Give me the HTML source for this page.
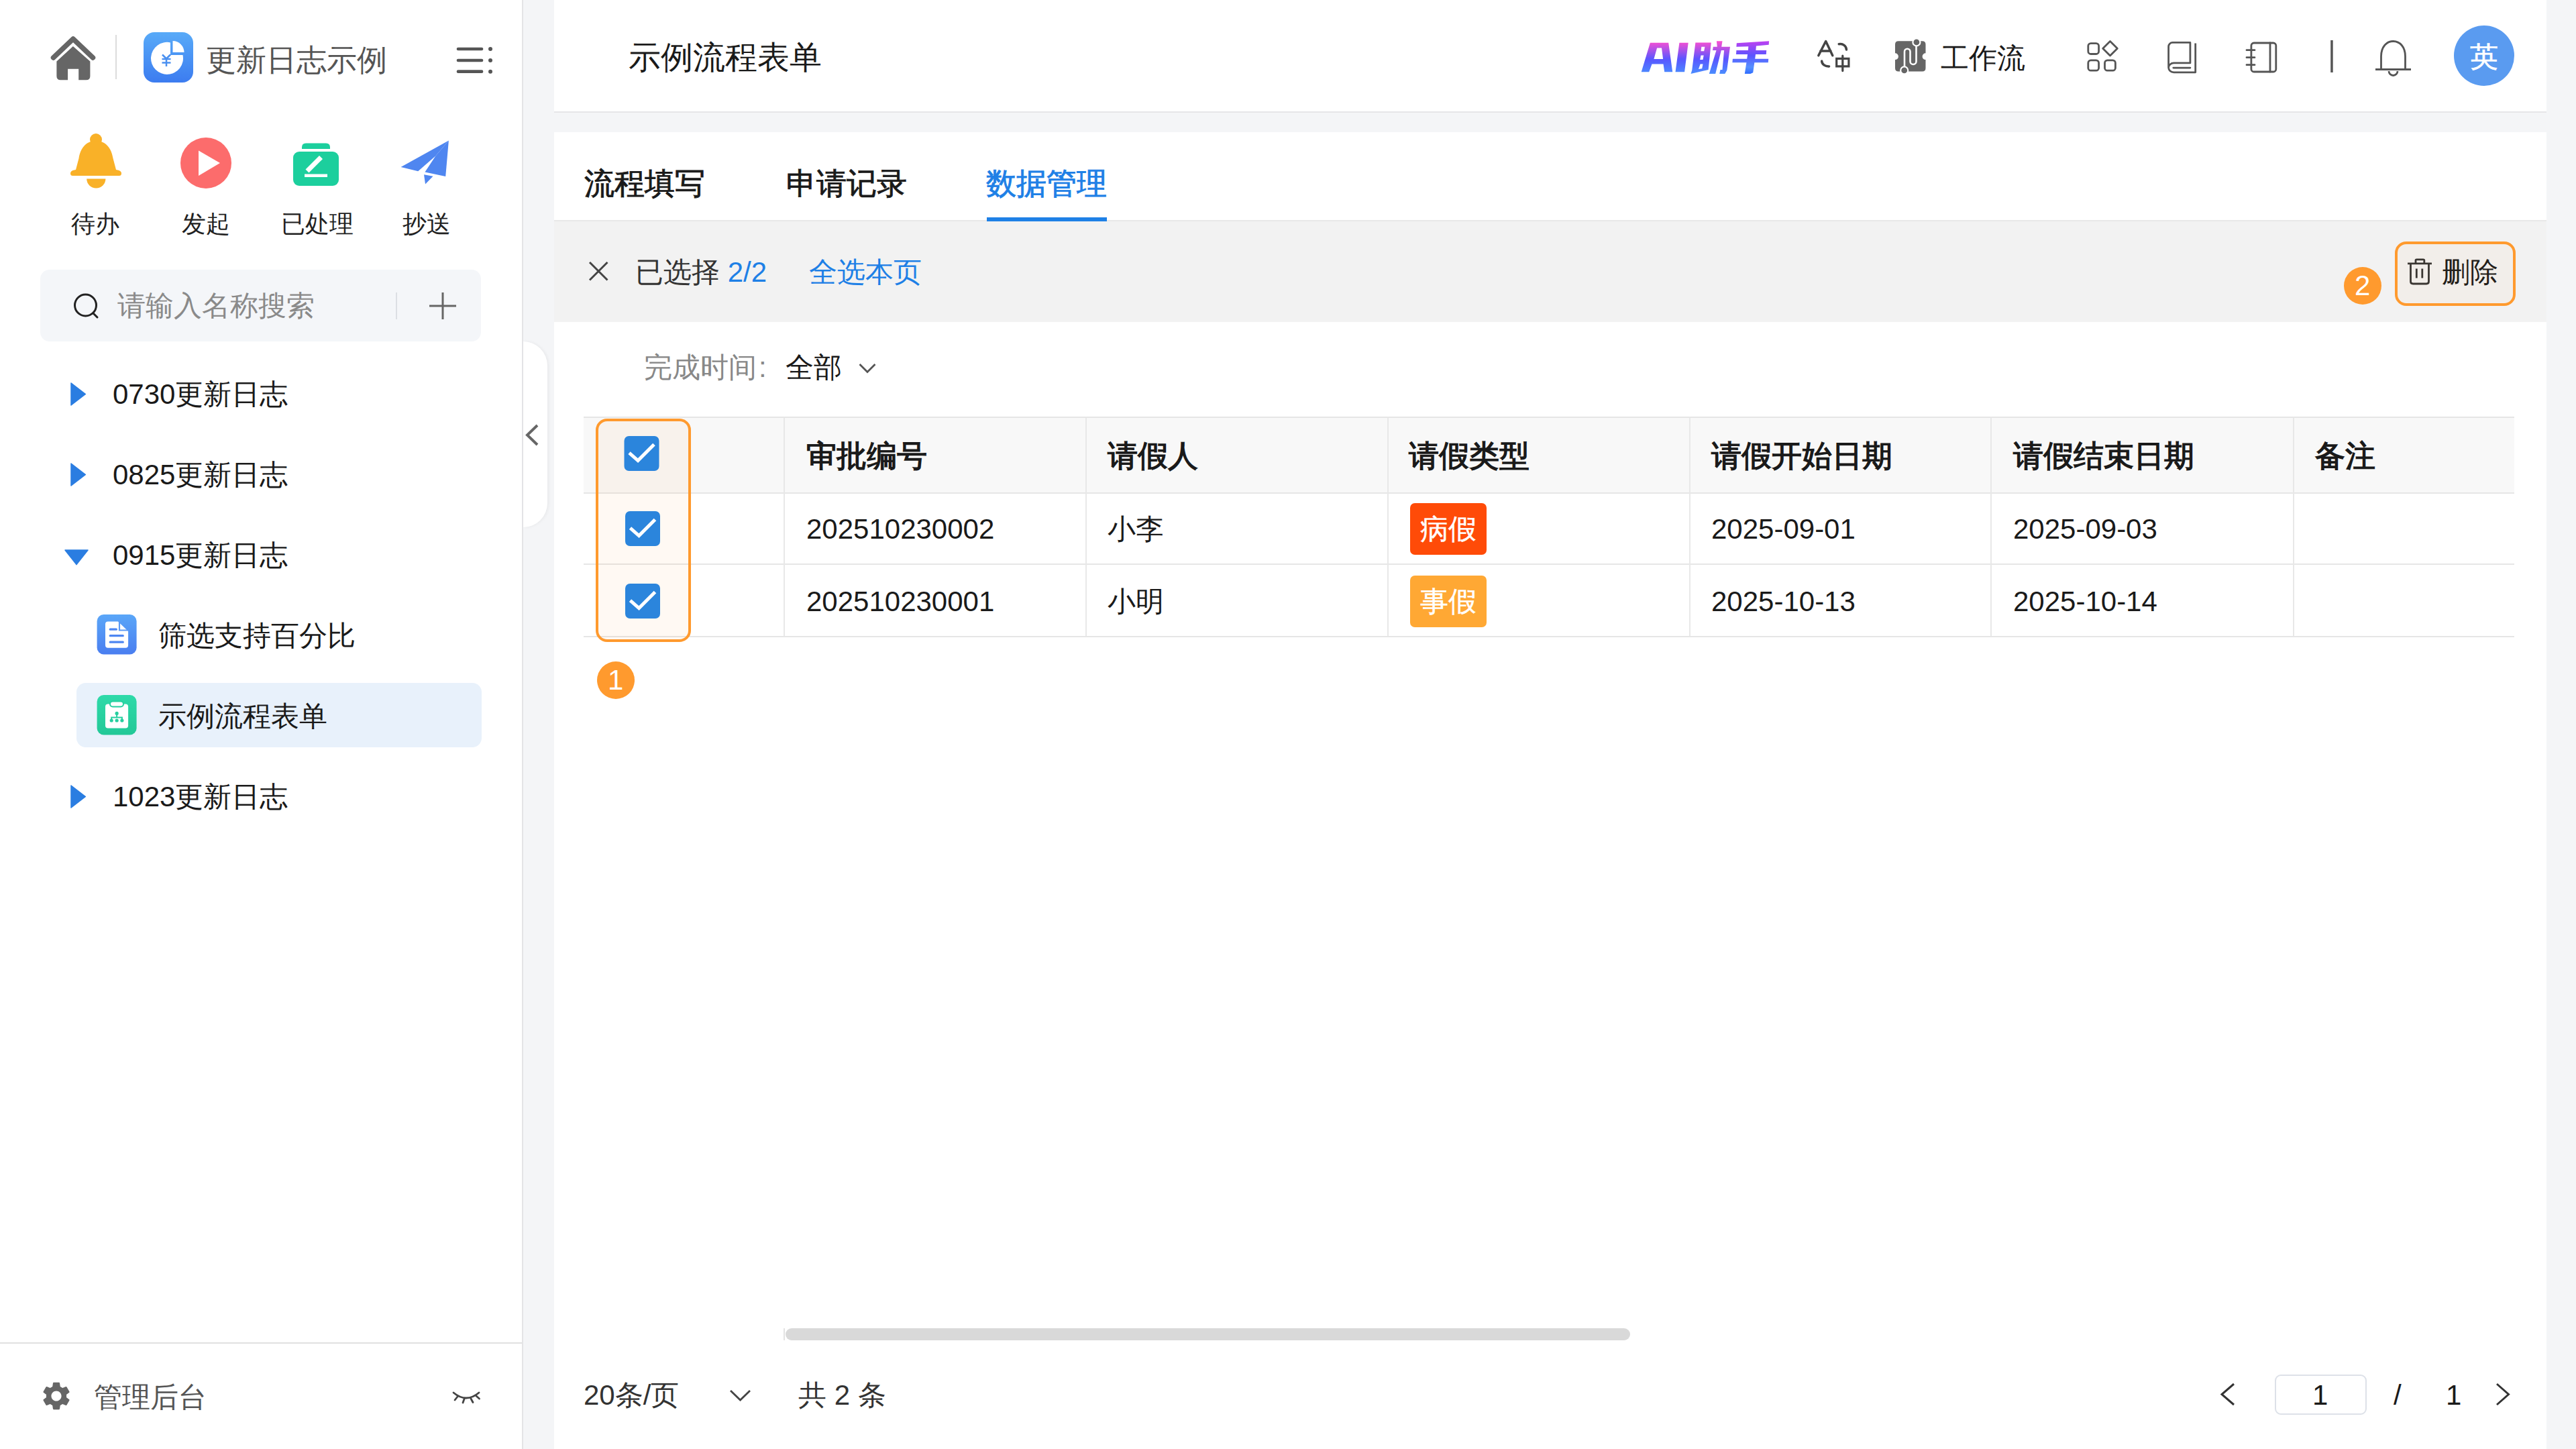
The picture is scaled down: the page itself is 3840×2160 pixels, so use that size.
<!DOCTYPE html>
<html><head><meta charset="utf-8">
<style>
html,body{margin:0;padding:0;}
body{width:3840px;height:2160px;overflow:hidden;position:relative;background:#f4f5f7;font-family:"Liberation Sans",sans-serif;color:#1a1a1a;}
.a{position:absolute;}
.t{position:absolute;white-space:nowrap;line-height:1;}
.ov{position:absolute;left:0;top:0;}
</style></head><body>

<!-- sidebar -->
<div class="a" style="left:0;top:0;width:778px;height:2160px;background:#fff;border-right:2px solid #e4e4e6;"></div>
<div class="t" style="left:307px;top:67px;font-size:45px;color:#555;">更新日志示例</div>

<div class="t" style="left:106px;top:316px;font-size:36px;color:#222;">待办</div>
<div class="t" style="left:271px;top:316px;font-size:36px;color:#222;">发起</div>
<div class="t" style="left:419px;top:316px;font-size:36px;color:#222;">已处理</div>
<div class="t" style="left:600px;top:316px;font-size:36px;color:#222;">抄送</div>

<div class="a" style="left:60px;top:402px;width:657px;height:107px;background:#f4f6f9;border-radius:14px;"></div>
<div class="t" style="left:175px;top:435px;font-size:42px;color:#8a8a8a;">请输入名称搜索</div>
<div class="a" style="left:590px;top:436px;width:2px;height:40px;background:#dcdfe4;"></div>

<div class="t" style="left:168px;top:567px;font-size:42px;">0730更新日志</div>
<div class="t" style="left:168px;top:687px;font-size:42px;">0825更新日志</div>
<div class="t" style="left:168px;top:807px;font-size:42px;">0915更新日志</div>
<div class="t" style="left:236px;top:927px;font-size:42px;">筛选支持百分比</div>
<div class="a" style="left:114px;top:1018px;width:604px;height:96px;background:#e8f1fb;border-radius:14px;"></div>
<div class="t" style="left:236px;top:1047px;font-size:42px;">示例流程表单</div>
<div class="t" style="left:168px;top:1167px;font-size:42px;">1023更新日志</div>

<div class="a" style="left:0;top:2001px;width:778px;height:2px;background:#e0e0e0;"></div>
<div class="t" style="left:140px;top:2062px;font-size:42px;color:#555;">管理后台</div>

<!-- collapse tab -->
<div class="a" style="left:780px;top:509px;width:36px;height:277px;background:#fff;border-radius:0 36px 36px 0;box-shadow:2px 0 4px rgba(0,0,0,0.05);"></div>

<!-- main header -->
<div class="a" style="left:826px;top:0;width:2970px;height:166px;background:#fff;border-bottom:2px solid #e6e6e8;"></div>
<div class="t" style="left:937px;top:62px;font-size:48px;">示例流程表单</div>
<div class="t" style="left:2893px;top:66px;font-size:42px;">工作流</div>

<!-- tabs -->
<div class="a" style="left:826px;top:197px;width:2970px;height:131px;background:#fff;border-bottom:2px solid #e8e8e8;"></div>
<div class="t" style="left:871px;top:251px;font-size:45px;-webkit-text-stroke:0.9px #1a1a1a;">流程填写</div>
<div class="t" style="left:1172px;top:251px;font-size:45px;-webkit-text-stroke:0.9px #1a1a1a;">申请记录</div>
<div class="t" style="left:1470px;top:251px;font-size:45px;color:#1e80e6;-webkit-text-stroke:0.9px #1e80e6;">数据管理</div>
<div class="a" style="left:1471px;top:324px;width:179px;height:6px;background:#1e80e6;"></div>

<!-- selection bar -->
<div class="a" style="left:826px;top:330px;width:2970px;height:150px;background:#f2f2f2;"></div>
<div class="t" style="left:947px;top:385px;font-size:42px;color:#333;">已选择 <span style="color:#1e80e6">2/2</span></div>
<div class="t" style="left:1206px;top:385px;font-size:42px;color:#1e80e6;">全选本页</div>
<div class="t" style="left:3640px;top:385px;font-size:42px;color:#1a1a1a;">删除</div>

<!-- content -->
<div class="a" style="left:826px;top:480px;width:2970px;height:1680px;background:#fff;"></div>
<div class="t" style="left:960px;top:527px;font-size:42px;color:#888;">完成时间<span style="margin-left:3px">:</span></div>
<div class="t" style="left:1171px;top:527px;font-size:42px;color:#1a1a1a;">全部</div>

<!-- table -->
<div class="a" style="left:870px;top:621px;width:2878px;height:111px;background:#f8f8f8;border-top:2px solid #e6e6e6;border-bottom:2px solid #e6e6e6;"></div>
<div class="a" style="left:870px;top:840px;width:2878px;height:2px;background:#e6e6e6;"></div>
<div class="a" style="left:870px;top:948px;width:2878px;height:2px;background:#e6e6e6;"></div>
<div class="a" style="left:1168px;top:623px;width:2px;height:325px;background:#e8e8e8;"></div>
<div class="a" style="left:1618px;top:623px;width:2px;height:325px;background:#e8e8e8;"></div>
<div class="a" style="left:2068px;top:623px;width:2px;height:325px;background:#e8e8e8;"></div>
<div class="a" style="left:2518px;top:623px;width:2px;height:325px;background:#e8e8e8;"></div>
<div class="a" style="left:2967px;top:623px;width:2px;height:325px;background:#e8e8e8;"></div>
<div class="a" style="left:3418px;top:623px;width:2px;height:325px;background:#e8e8e8;"></div>

<div class="t" style="left:1202px;top:657px;font-size:45px;font-weight:bold;">审批编号</div>
<div class="t" style="left:1651px;top:657px;font-size:45px;font-weight:bold;">请假人</div>
<div class="t" style="left:2100px;top:657px;font-size:45px;font-weight:bold;">请假类型</div>
<div class="t" style="left:2551px;top:657px;font-size:45px;font-weight:bold;">请假开始日期</div>
<div class="t" style="left:3001px;top:657px;font-size:45px;font-weight:bold;">请假结束日期</div>
<div class="t" style="left:3451px;top:657px;font-size:45px;font-weight:bold;">备注</div>

<div class="t" style="left:1202px;top:768px;font-size:42px;">202510230002</div>
<div class="t" style="left:1651px;top:768px;font-size:42px;">小李</div>
<div class="a" style="left:2102px;top:750px;width:114px;height:77px;background:#ff4b08;border-radius:7px;"></div>
<div class="t" style="left:2117px;top:768px;font-size:42px;color:#fff;-webkit-text-stroke:0.5px #fff;">病假</div>
<div class="t" style="left:2551px;top:768px;font-size:42px;">2025-09-01</div>
<div class="t" style="left:3001px;top:768px;font-size:42px;">2025-09-03</div>

<div class="t" style="left:1202px;top:876px;font-size:42px;">202510230001</div>
<div class="t" style="left:1651px;top:876px;font-size:42px;">小明</div>
<div class="a" style="left:2102px;top:858px;width:114px;height:77px;background:#ffa834;border-radius:7px;"></div>
<div class="t" style="left:2117px;top:876px;font-size:42px;color:#fff;-webkit-text-stroke:0.5px #fff;">事假</div>
<div class="t" style="left:2551px;top:876px;font-size:42px;">2025-10-13</div>
<div class="t" style="left:3001px;top:876px;font-size:42px;">2025-10-14</div>

<!-- scrollbar -->
<div class="a" style="left:1168px;top:1980px;width:2px;height:18px;background:#e3e3e3;"></div>
<div class="a" style="left:1171px;top:1980px;width:1259px;height:18px;background:#d9d9d9;border-radius:9px;"></div>

<!-- pagination -->
<div class="t" style="left:870px;top:2059px;font-size:42px;color:#333;">20条/页</div>
<div class="t" style="left:1190px;top:2059px;font-size:42px;color:#333;">共 2 条</div>
<div class="a" style="left:3391px;top:2049px;width:133px;height:56px;border:2px solid #dde1e8;border-radius:9px;"></div>
<div class="t" style="left:3447px;top:2059px;font-size:42px;color:#1a1a1a;">1</div>
<div class="t" style="left:3568px;top:2059px;font-size:42px;color:#1a1a1a;">/</div>
<div class="t" style="left:3646px;top:2059px;font-size:42px;color:#1a1a1a;">1</div>

<!-- avatar -->
<div class="a" style="left:3658px;top:38px;width:90px;height:90px;border-radius:50%;background:#5a9bf0;"></div>
<div class="t" style="left:3682px;top:64px;font-size:42px;color:#fff;-webkit-text-stroke:0.6px #fff;">英</div>

<!-- badges -->
<div class="a" style="left:3494px;top:398px;width:56px;height:56px;border-radius:50%;background:#ff9a2e;"></div>
<div class="t" style="left:3510px;top:405px;font-size:42px;color:#fff;">2</div>
<div class="a" style="left:890px;top:986px;width:56px;height:56px;border-radius:50%;background:#ff9a2e;"></div>
<div class="t" style="left:906px;top:993px;font-size:42px;color:#fff;">1</div>

<!-- ICONS OVERLAY -->
<svg class="ov" width="3840" height="2160" viewBox="0 0 3840 2160">
<defs>
<linearGradient id="gBlue" x1="0" y1="0" x2="0" y2="1"><stop offset="0" stop-color="#58aaf8"/><stop offset="1" stop-color="#3c7cf0"/></linearGradient>
<linearGradient id="gDoc" x1="0" y1="0" x2="0" y2="1"><stop offset="0" stop-color="#5aa6f8"/><stop offset="1" stop-color="#4a7ef0"/></linearGradient>
<linearGradient id="gGreen" x1="0" y1="0" x2="0" y2="1"><stop offset="0" stop-color="#2edaa9"/><stop offset="1" stop-color="#22c897"/></linearGradient>
<linearGradient id="gAI" gradientUnits="userSpaceOnUse" x1="0" y1="61" x2="0" y2="110"><stop offset="0" stop-color="#ff4fd0"/><stop offset="0.55" stop-color="#5a55ff"/><stop offset="1" stop-color="#4a8dff"/></linearGradient><linearGradient id="gAI2" gradientUnits="userSpaceOnUse" x1="0" y1="61" x2="0" y2="110"><stop offset="0" stop-color="#c040f0"/><stop offset="0.45" stop-color="#5a55ff"/><stop offset="0.8" stop-color="#5590ff"/><stop offset="1" stop-color="#2f6dff"/></linearGradient>
</defs>
<!-- home -->
<path d="M79.5,86 L109,58 L138.5,86" fill="none" stroke="#666" stroke-width="7.5" stroke-linecap="round" stroke-linejoin="round"/>
<path d="M108.9,68.9 L134.4,91.5 L134.4,113.5 Q134.4,119.3 128.6,119.3 L117.2,119.3 L117.2,102.7 L101.1,102.7 L101.1,119.3 L90.2,119.3 Q84.4,119.3 84.4,113.5 L84.4,91.5 Z" fill="#666"/>
<rect x="172" y="52" width="2" height="66" fill="#dcdcdc"/>
<!-- app icon -->
<rect x="214" y="48" width="74" height="75" rx="16" fill="url(#gBlue)"/>
<path d="M254,63.4 L254,82 L272.5,82 A24,24 0 1 1 254,63.4 Z" fill="#fff"/>
<path d="M257.5,61 L257.5,78 L274.5,78 A17,17 0 0 0 257.5,61 Z" fill="#fff"/>
<path d="M242,81.5 L248,87.5 L254,81.5 M241.5,88 H254.5 M241.5,93.6 H254.5 M248,87.5 V99" fill="none" stroke="#4a90f0" stroke-width="2.5"/>
<!-- menu -->
<path d="M683,73 H718 M683,90 H718 M683,106.7 H718" stroke="#555" stroke-width="4.7" stroke-linecap="round"/>
<circle cx="731" cy="73" r="3" fill="#555"/><circle cx="731" cy="90" r="3" fill="#555"/><circle cx="731" cy="106.7" r="3" fill="#555"/>
<!-- bell yellow -->
<circle cx="143" cy="208" r="9" fill="#f9b128"/>
<path d="M143,210 C128,210 120,221 117.5,236 L113,253 L108.5,254 Q105,255.5 105,258.5 Q105,262 108.5,262 L177.5,262 Q181,262 181,258.5 Q181,255.5 177.5,254 L173,253 L168.5,236 C166,221 158,210 143,210 Z" fill="#f9b128"/>
<path d="M129.2,266.5 A14.1,14.1 0 0 0 157.4,266.5 Z" fill="#f9b128"/>
<!-- play -->
<circle cx="307" cy="243" r="38" fill="#fc6c6c"/>
<path d="M296,224.6 L296,262 L328,243 Z" fill="#fff"/>
<!-- green box -->
<rect x="437" y="226" width="68" height="51" rx="9" fill="#1ccf9d"/>
<path d="M450,222 L450,219.5 Q450,213.4 456,213.4 L486,213.4 Q492,213.4 492,219.5 L492,222 Z" fill="#1ccf9d"/>
<path d="M458,255 L478.5,234.5" stroke="#fff" stroke-width="7"/>
<rect x="454" y="259.5" width="34" height="4.5" fill="#fff"/>
<!-- plane -->
<path d="M597.6,249 L668.9,209.4 L649.3,232.6 L623.2,255.2 Z" fill="#4f86f0"/>
<path d="M668.9,209.4 L664.2,263.1 L633.4,256.6 L649.3,232.6 Z" fill="#4f86f0"/>
<path d="M632,260.2 L645.5,262.8 L634,274.5 Z" fill="#4f86f0"/>
<!-- search -->
<circle cx="127.5" cy="455" r="16" fill="none" stroke="#222" stroke-width="3"/>
<path d="M139,467 L145,473" stroke="#222" stroke-width="3" stroke-linecap="round"/>
<path d="M660,436 V476 M640,456 H680" stroke="#666" stroke-width="3"/>
<!-- tree triangles -->
<path d="M106,571 L127.4,587.5 L106,604 Z" fill="#2a7de1" stroke="#2a7de1" stroke-width="1.5" stroke-linejoin="round"/>
<path d="M106,691 L127.4,707.5 L106,724 Z" fill="#2a7de1" stroke="#2a7de1" stroke-width="1.5" stroke-linejoin="round"/>
<path d="M97,820 L131,820 L114,841.6 Z" fill="#2a7de1" stroke="#2a7de1" stroke-width="1.5" stroke-linejoin="round"/>
<path d="M106,1171 L127.4,1187.5 L106,1204 Z" fill="#2a7de1" stroke="#2a7de1" stroke-width="1.5" stroke-linejoin="round"/>
<!-- doc icon -->
<rect x="144.6" y="916" width="59" height="59.5" rx="10" fill="url(#gDoc)"/>
<path d="M161,926.4 H176 L191.1,941 V961.7 Q191.1,965.7 187.1,965.7 H161 Q157,965.7 157,961.7 V930.4 Q157,926.4 161,926.4 Z" fill="#fff"/>
<path d="M178,926 V939.5 H192" fill="none" stroke="#5a9af5" stroke-width="2.2"/>
<path d="M164.2,938.2 H173.4 M164.2,947.7 H183.3 M164.2,957.2 H183.3" stroke="#4d86f2" stroke-width="3.2" stroke-linecap="round"/>
<!-- green clipboard icon -->
<rect x="144.6" y="1036" width="59" height="59.5" rx="10" fill="url(#gGreen)"/>
<rect x="157" y="1049.6" width="34.1" height="36" rx="4" fill="#fff"/>
<rect x="164" y="1045.5" width="20" height="8" rx="4" fill="#fff" stroke="#26d0a0" stroke-width="2"/>
<path d="M174.1,1063.4 V1069.5 M166.2,1073.9 V1069.5 H181.9 V1073.9" fill="none" stroke="#26cf9f" stroke-width="2"/>
<circle cx="174.1" cy="1063.4" r="2.6" fill="#26cf9f"/><circle cx="166.2" cy="1074" r="2.6" fill="#26cf9f"/><circle cx="174.1" cy="1074" r="2.6" fill="#26cf9f"/><circle cx="181.9" cy="1074" r="2.6" fill="#26cf9f"/>
<!-- gear -->
<path transform="translate(84,2081) scale(2.1) translate(-12,-12)" fill="#666" d="M19.14,12.94c0.04-0.3,0.06-0.61,0.06-0.94c0-0.32-0.02-0.64-0.07-0.94l2.03-1.58c0.18-0.14,0.23-0.41,0.12-0.61 l-1.92-3.32c-0.12-0.22-0.37-0.29-0.59-0.22l-2.39,0.96c-0.5-0.38-1.030-0.7-1.62-0.94L14.4,2.81c-0.04-0.24-0.24-0.41-0.48-0.41 h-3.84c-0.24,0-0.43,0.17-0.47,0.41L9.25,5.35C8.66,5.59,8.12,5.92,7.63,6.29L5.24,5.33c-0.22-0.08-0.47,0-0.59,0.22L2.74,8.87 C2.62,9.08,2.66,9.34,2.86,9.48l2.03,1.58C4.84,11.360,4.8,11.69,4.8,12s0.02,0.64,0.07,0.94l-2.03,1.58 c-0.18,0.14-0.23,0.41-0.12,0.61l1.92,3.32c0.12,0.22,0.37,0.29,0.59,0.22l2.39-0.96c0.5,0.38,1.03,0.7,1.62,0.94l0.36,2.54 c0.05,0.24,0.24,0.41,0.48,0.41h3.84c0.24,0,0.44-0.17,0.47-0.41l0.36-2.54c0.59-0.24,1.13-0.56,1.62-0.94l2.39,0.96 c0.22,0.08,0.47,0,0.59-0.22l1.92-3.32c0.12-0.22,0.07-0.47-0.12-0.61L19.14,12.94z M12,15.6c-1.98,0-3.6-1.62-3.6-3.6 s1.62-3.6,3.6-3.6s3.6,1.62,3.6,3.6S13.98,15.6,12,15.6z"/>
<!-- eye closed -->
<path d="M676,2076 Q695,2092 714,2076 M682,2082 L678,2087 M692,2085.5 L690,2091 M702,2085 L705,2090.5 M710,2081 L714.5,2085" fill="none" stroke="#444" stroke-width="2.8" stroke-linecap="round"/>
<!-- collapse chevron -->
<path d="M801,634 L786,648.5 L801,663" fill="none" stroke="#666" stroke-width="4"/>
<!-- AI logo -->
<path d="M2459.9,63.8 L2487.2,63.8 L2493.2,107.3 L2481.2,107.3 L2479.5,95.4 L2462.5,95.4 L2458.2,107.3 L2446.7,107.3 Z M2470.1,71.5 L2465.4,88.1 L2479.1,88.1 L2477.0,71.5 Z M2503.4,63.8 L2516.7,63.8 L2511.1,107.3 L2497.5,107.3 Z M2527.4,63.4 L2550.8,63.4 L2546.6,103.9 L2520.5,109.9 L2522.2,104.8 Z M2536.3,69.8 L2535.5,76.2 L2540.2,76.2 L2541.4,69.8 Z M2535.5,82.6 L2534.2,89.0 L2538.5,89.0 L2539.7,82.6 Z M2534.6,95.4 L2532.0,103.1 L2537.2,102.2 L2538.5,95.4 Z M2558.9,61.2 L2567.5,61.2 L2566.2,69.8 L2579.0,69.8 L2574.3,104.8 L2571.3,109.9 L2563.2,109.9 L2564.5,103.9 L2567.5,103.9 L2570.1,74.9 L2565.8,74.9 L2557.2,109.9 L2547.8,109.9 L2558.5,74.9 L2553.0,74.9 L2553.8,69.8 L2559.8,69.8 Z" fill="url(#gAI)" fill-rule="evenodd"/>
<path d="M2588.8,64.2 L2637.1,61.2 L2636.7,66.8 L2617.9,68.5 L2617.4,74.9 L2633.2,74.9 L2632.8,80.9 L2617.0,80.9 L2616.2,87.7 L2636.2,87.7 L2635.8,93.2 L2615.3,93.2 L2613.2,108.2 L2609.3,109.9 L2600.8,109.9 L2603.4,93.2 L2582.4,93.2 L2582.9,87.7 L2604.2,87.7 L2605.1,80.9 L2588.0,80.9 L2588.4,74.9 L2605.9,74.9 L2606.3,69.3 L2588.4,69.8 Z" fill="url(#gAI2)"/>
<!-- translate icon -->
<path d="M2710.8,82.8 L2721.7,61.5 L2731.8,82.8 M2713.8,76 H2729" fill="none" stroke="#444" stroke-width="3.5" stroke-linejoin="round" stroke-linecap="round"/>
<path d="M2741.2,65.7 A9,8.5 0 0 1 2752.4,74.1 M2715.7,90.9 A10,8 0 0 0 2726.6,98.9" fill="none" stroke="#444" stroke-width="3.5" stroke-linecap="round"/>
<path d="M2737.7,87.4 H2755.9 V98.9 H2737.7 Z M2746.8,83.2 V105.6" fill="none" stroke="#444" stroke-width="3.2" stroke-linecap="round"/>
<!-- workflow icon -->
<path d="M2830,61.2 H2865.5 Q2870.5,61.2 2870.5,66.2 V79.3 A4.9,4.9 0 0 0 2870.5,89.1 V101.6 Q2870.5,106.6 2865.5,106.6 H2830 Q2825,106.6 2825,101.6 V89.1 A4.9,4.9 0 0 0 2825,79.3 V66.2 Q2825,61.2 2830,61.2 Z" fill="#666"/>
<path d="M2839,100 V77 A4.25,4.25 0 0 1 2847.5,77 V91.5 A4.5,4.5 0 0 0 2856.5,91.5 V66" fill="none" stroke="#fff" stroke-width="2.6"/>
<circle cx="2856.9" cy="62.9" r="5.5" fill="#666" stroke="#fff" stroke-width="2.2"/>
<circle cx="2838.7" cy="104.9" r="5.5" fill="#666" stroke="#fff" stroke-width="2.2"/>
<!-- apps -->
<g fill="none" stroke="#555" stroke-width="2.8" stroke-linejoin="round">
<rect x="3112.8" y="64.6" width="15.8" height="15.9" rx="4"/>
<path d="M3145.5,61.5 L3156.3,72.3 L3145.5,83.1 L3134.7,72.3 Z"/>
<rect x="3112.8" y="89.9" width="15.8" height="15.3" rx="4"/>
<rect x="3137.5" y="89.9" width="15.9" height="15.3" rx="4"/>
<!-- book -->
<path d="M3272.7,64.4 V107.8 H3240.5 A8,7 0 0 1 3232.6,100.8 V69.4 A6,6 0 0 1 3238.6,63.4 H3264.9 V93.9 H3240.5 A8,7 0 0 0 3232.6,100.8"/>
<path d="M3239.8,101.1 H3264.9" stroke-linecap="round"/>
<!-- notebook -->
<rect x="3355.9" y="64" width="36.9" height="43" rx="4"/>
<path d="M3384,64 V107 M3349,74.7 H3361 M3349,85.7 H3361 M3349,96.7 H3361" stroke-linecap="round"/>
<!-- bell -->
<path d="M3549.5,103.5 V84 C3549.5,70 3557.5,61.5 3567.5,61.5 C3577.5,61.5 3585.5,70 3585.5,84 V103.5 M3541,103.5 H3594 M3561,106 A6.5,6.5 0 0 0 3574,106"/>
</g>
<rect x="3474.2" y="60" width="3.5" height="48" fill="#555"/>
<!-- selection close -->
<path d="M879,391 L905.5,417.5 M905.5,391 L879,417.5" stroke="#444" stroke-width="3"/>
<!-- trash -->
<g fill="none" stroke="#333" stroke-width="2.8">
<path d="M3589,392.8 H3625"/>
<path d="M3601,392.5 V388 Q3601,386.8 3602.5,386.8 H3612.2 Q3613.8,386.8 3613.8,388 V392.5"/>
<path d="M3593.5,393 V419.5 Q3593.5,423 3597,423 H3617 Q3620.5,423 3620.5,419.5 V393"/>
<path d="M3602.3,400.6 V414.5 M3610.8,400.6 V414.5"/>
</g>
<!-- delete orange box -->
<rect x="3572" y="362" width="176" height="92" rx="15" fill="rgba(255,140,30,0.035)" stroke="#ff9a2e" stroke-width="4"/>
<!-- filter chevron -->
<path d="M1281.5,543 L1293,554.5 L1304.5,543" fill="none" stroke="#555" stroke-width="2.8"/>
<!-- checkbox column orange box -->
<rect x="890" y="626" width="138" height="329" rx="15" fill="rgba(255,140,30,0.055)" stroke="#ff9a2e" stroke-width="4"/>
<!-- checkboxes -->
<rect x="930.5" y="650" width="52" height="52" rx="7" fill="#2b85dc"/>
<path d="M938,675.2 L951,686.6 L975,662.4" fill="none" stroke="#fff" stroke-width="5"/>
<rect x="932" y="762" width="52" height="52" rx="7" fill="#2b85dc"/>
<path d="M939.5,787.2 L952.5,798.6 L976.5,774.4" fill="none" stroke="#fff" stroke-width="5"/>
<rect x="932" y="870" width="52" height="52" rx="7" fill="#2b85dc"/>
<path d="M939.5,895.2 L952.5,906.6 L976.5,882.4" fill="none" stroke="#fff" stroke-width="5"/>
<!-- pagination chevrons -->
<path d="M1089,2073 L1103.5,2087 L1118,2073" fill="none" stroke="#444" stroke-width="2.8"/>
<path d="M3330,2063 L3312,2078.5 L3330,2094" fill="none" stroke="#333" stroke-width="3"/>
<path d="M3722,2063 L3739.5,2078.5 L3722,2094" fill="none" stroke="#333" stroke-width="3"/>
</svg>


</body></html>
